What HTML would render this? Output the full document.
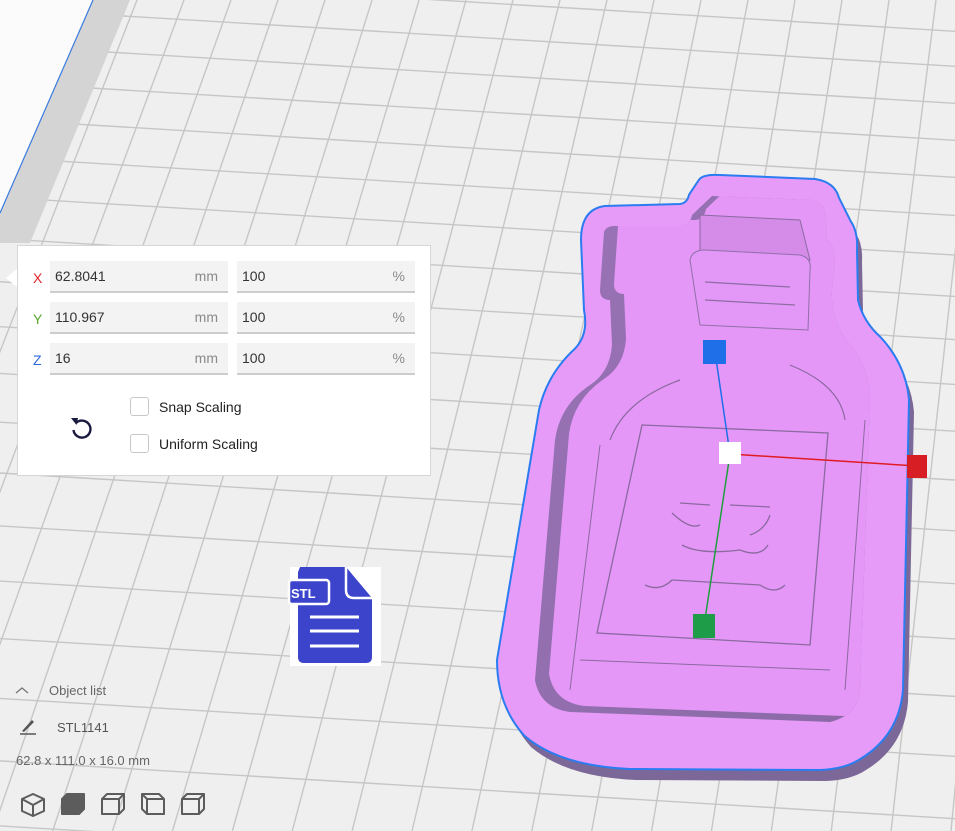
<!DOCTYPE html>
<html><head><meta charset="utf-8">
<style>
html,body{margin:0;padding:0;width:955px;height:831px;overflow:hidden;background:#efefef;font-family:"Liberation Sans","DejaVu Sans",sans-serif;}
#bg{position:absolute;left:0;top:0}
.panel{position:absolute;left:17px;top:245px;width:414px;height:231px;background:#fff;border:1px solid #d6d6d6;box-sizing:border-box}
.arrow{position:absolute;left:6px;top:268px;width:0;height:0;border-top:10px solid transparent;border-bottom:10px solid transparent;border-right:12px solid #fff}
.lab{position:absolute;font-size:14px}
.fld{position:absolute;height:32px;background:#f3f3f3;border-bottom:2px solid #cdcdcd;box-sizing:border-box;font-size:14px;color:#333;line-height:31px;padding-left:5px}
.fld span{position:absolute;right:10px;top:0;color:#8a8a8a}
.cb{position:absolute;left:130px;width:19px;height:19px;border:1px solid #c8c8c8;border-radius:3px;background:#fff;box-sizing:border-box}
.ct{position:absolute;left:159px;font-size:14px;color:#222}
.t{position:absolute;font-size:13px;color:#555}
</style></head><body>
<svg id="bg" width="955" height="831" xmlns="http://www.w3.org/2000/svg">
<rect width="955" height="831" fill="#efefef"/>
<g id="grid"></g>
<polygon points="93,0 130,0 30,243 0,243 0,213" fill="#d4d4d4"/>
<polygon points="0,0 93,0 0,213" fill="#fbfbfb"/>
<line x1="93" y1="0" x2="0" y2="213" stroke="#3a7be0" stroke-width="1.2"/>
<!-- model -->
<defs>
<path id="outer" d="M700,180 Q704,175 720,176 L815,180 Q834,183 838,198 L850,222 Q857,232 856,250 L857,300 Q862,322 880,338 Q905,365 908,400 L902,690 Q898,735 860,758 Q845,768 820,769 L630,768 Q560,765 525,735 Q498,705 498,660 L540,410 Q548,375 575,350 Q590,335 585,310 L582,240 Q582,210 605,207 L680,205 Q688,204 690,195 Z"/>
<path id="inner" d="M712,196 L812,200 Q826,203 826,220 L827,240 Q835,246 835,262 L832,290 Q830,320 850,345 Q870,368 870,400 L860,690 Q858,715 830,722 L570,712 Q540,708 535,680 L555,440 Q560,405 590,385 Q610,372 612,345 L610,300 Q600,300 600,290 L604,232 Q606,226 615,226 L680,226 Q690,226 692,215 Z"/>
<clipPath id="ci"><use href="#inner"/></clipPath>
<linearGradient id="wall" x1="0" y1="0" x2="1" y2="1"><stop offset="0" stop-color="#9a73b6"/><stop offset="1" stop-color="#8a6aa6"/></linearGradient>
</defs>
<use href="#outer" transform="translate(6,12)" fill="#7c6898"/>
<use href="#outer" fill="none" stroke="#2a7cf0" stroke-width="4"/>
<use href="#outer" fill="#e69bf9"/>
<use href="#inner" fill="url(#wall)"/>
<g clip-path="url(#ci)"><use href="#inner" transform="translate(14,-6)" fill="#e597f8"/></g>
<!-- neck inner structures -->
<path d="M700,215 L800,220 L810,260 L700,255 Z" fill="#d58ce9" stroke="#8a6aa0" stroke-width="1"/>
<path d="M690,260 Q692,250 705,250 L800,255 Q812,258 810,270 L808,330 L700,325 Z" fill="#e398f8" stroke="#9070aa" stroke-width="1"/>
<path d="M705,282 L790,287 M705,300 L795,305" stroke="#8c6ca3" stroke-width="1.2" fill="none"/>
<path d="M610,440 Q625,400 680,380 M790,365 Q840,385 845,420" stroke="#8a6aa0" stroke-width="1.2" fill="none"/>
<path d="M642,425 L828,433 L810,645 L597,633 Z" fill="none" stroke="#8a6aa0" stroke-width="1.3"/>
<path d="M600,445 L570,690 M865,420 L845,690 M580,660 L830,670" stroke="#8a6aa0" stroke-width="1" fill="none"/>
<path d="M680,503 L710,505 M730,505 L770,507 M672,513 Q690,530 700,525 M770,515 Q765,530 750,535 M682,545 Q700,555 740,550 Q760,558 768,545 M645,585 Q660,592 672,580 L760,585 Q775,595 785,585" stroke="#8a6aa0" stroke-width="1.3" fill="none"/>
<!-- gizmo -->
<line x1="715" y1="352" x2="730" y2="454" stroke="#1f6fe8" stroke-width="1.5"/>
<line x1="730" y1="454" x2="917" y2="466" stroke="#e01b24" stroke-width="1.5"/>
<line x1="730" y1="454" x2="704" y2="626" stroke="#1f9e3e" stroke-width="1.5"/>
<rect x="703" y="340" width="23" height="24" fill="#1f6fe8"/>
<rect x="719" y="442" width="22" height="22" fill="#ffffff"/>
<rect x="907" y="455" width="20" height="23" fill="#d81e25"/>
<rect x="693" y="614" width="22" height="24" fill="#1e9c48"/>
<!-- STL icon -->
<rect x="290" y="567" width="91" height="99" fill="#fff"/>
<path d="M300,567 L346,567 L372,598 L372,657 Q372,663 366,663 L304,663 Q298,663 298,657 L298,572 Z" fill="#3c44cc"/>
<path d="M346,567 L346,590 Q346,598 354,598 L372,598" fill="none" stroke="#fff" stroke-width="2.5"/>
<rect x="289" y="580" width="40" height="24" rx="3" fill="#3c44cc" stroke="#fff" stroke-width="2.5"/>
<text x="291" y="598" font-family="Liberation Sans" font-weight="bold" font-size="13" fill="#fff">STL</text>
<path d="M310,617 L359,617 M310,631 L359,631 M310,646 L359,646" stroke="#fff" stroke-width="3"/>
<!-- bottom icons -->
<path d="M16,693 L22,688 L28,693" fill="none" stroke="#777" stroke-width="1.3"/>
<path d="M20,734 L36,734" stroke="#555" stroke-width="1.5"/>
<path d="M22,731 L32,720 L34,722 L24,732 Z" fill="#555"/>
<g fill="none" stroke="#5c5c5c" stroke-width="2" stroke-linejoin="round">
<path d="M33,794 L44,799 L44,811 L33,816 L22,811 L22,799 Z M22,799 L33,805 L44,799 M33,805 L33,816"/>
<path d="M62,799 L67,794 L84,794 L84,809 L79,814 L62,814 Z" fill="#5c5c5c"/>
<path d="M102,799 L107,794 L124,794 L124,809 L119,814 L102,814 Z M102,799 L119,799 L119,814 M119,799 L124,794"/>
<path d="M142,794 L159,794 L164,799 L164,814 L147,814 L142,809 Z M147,799 L164,799 M147,799 L147,814 M142,794 L147,799"/>
<path d="M182,799 L187,794 L204,794 L204,809 L199,814 L182,814 Z M182,799 L199,799 L199,814 M199,799 L204,794"/>
</g>
</svg>
<div class="arrow"></div>
<div class="panel"></div>
<div class="lab" style="left:33px;top:270px;color:#e0262c">X</div>
<div class="lab" style="left:33px;top:311px;color:#5aa830">Y</div>
<div class="lab" style="left:33px;top:352px;color:#2a6ae0">Z</div>
<div class="fld" style="left:50px;top:261px;width:178px">62.8041<span>mm</span></div>
<div class="fld" style="left:237px;top:261px;width:178px">100<span>%</span></div>
<div class="fld" style="left:50px;top:302px;width:178px">110.967<span>mm</span></div>
<div class="fld" style="left:237px;top:302px;width:178px">100<span>%</span></div>
<div class="fld" style="left:50px;top:343px;width:178px">16<span>mm</span></div>
<div class="fld" style="left:237px;top:343px;width:178px">100<span>%</span></div>
<svg style="position:absolute;left:68px;top:414px" width="28" height="28" viewBox="0 0 28 28"><path d="M8,9 A8.5,8.5 0 1 1 5.5,16" fill="none" stroke="#1a1a40" stroke-width="2.4"/><path d="M3,4 L10,4 L8.5,11 Z" fill="#1a1a40"/></svg>
<div class="cb" style="top:397px"></div><div class="ct" style="top:399px">Snap Scaling</div>
<div class="cb" style="top:434px"></div><div class="ct" style="top:436px">Uniform Scaling</div>
<div class="t" style="left:49px;top:683px;color:#666">Object list</div>
<div class="t" style="left:57px;top:720px">STL1141</div>
<div class="t" style="left:16px;top:753px;color:#666">62.8 x 111.0 x 16.0 mm</div>
<script>
(function(){
var g=document.getElementById('grid'),ns='http://www.w3.org/2000/svg',h='';
var vx=1318,vy=-3030;
for(var k=-20;k<30;k++){var x0=137+47*k;var dx=(x0-vx)/(0-vy);var x1=x0+dx*831;
h+='<line x1="'+x0+'" y1="0" x2="'+x1+'" y2="831" stroke="#c6c6c6" stroke-width="1.4"/>';}
var y=15;var ys=[];var yy=15;while(yy>-60){yy-=35;ys.push(yy);}
for(var i=0;i<30&&y<900;i++){ys.push(y);y=y+37+Math.max(0,(y-100))*0.042;}
ys.forEach(function(y){var yl=y-100*0.065,yr=y+855*0.06;
h+='<line x1="0" y1="'+yl+'" x2="955" y2="'+yr+'" stroke="#c6c6c6" stroke-width="1.4"/>';});
g.innerHTML=h;
})();
</script>
</body></html>
